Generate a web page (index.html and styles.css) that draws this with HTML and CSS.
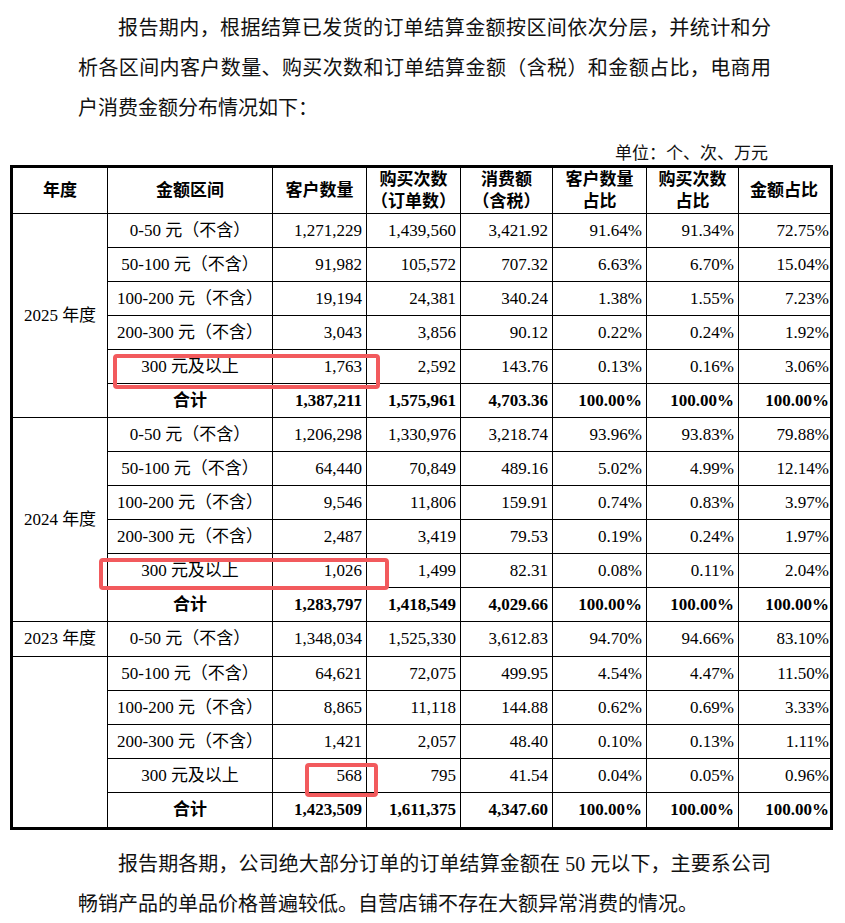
FILE: index.html
```html
<!DOCTYPE html>
<html lang="zh-CN">
<head>
<meta charset="utf-8">
<title>电商用户消费金额分布情况</title>
<link rel="stylesheet" href="styles.css">
</head>
<body>
<div class="page">
  <p class="para">报告期内，根据结算已发货的订单结算金额按区间依次分层，并统计和分析各区间内客户数量、购买次数和订单结算金额（含税）和金额占比，电商用户消费金额分布情况如下：</p>
  <div class="unit">单位：个、次、万元</div>
  <div class="table-wrap">
    <table class="data">
      <colgroup>
        <col class="c1"><col class="c2"><col class="c3"><col class="c4"><col class="c5"><col class="c6"><col class="c7"><col class="c8">
      </colgroup>
      <thead>
        <tr class="head">
          <th>年度</th><th>金额区间</th><th>客户数量</th><th>购买次数<br>（订单数）</th><th>消费额<br>（含税）</th><th>客户数量<br>占比</th><th>购买次数<br>占比</th><th class="last">金额占比</th>
        </tr>
      </thead>
      <tbody>
        <tr><td class="year" rowspan="6">2025 年度</td><td class="range">0-50 元（不含）</td><td>1,271,229</td><td>1,439,560</td><td>3,421.92</td><td>91.64%</td><td>91.34%</td><td class="last">72.75%</td></tr>
        <tr><td class="range">50-100 元（不含）</td><td>91,982</td><td>105,572</td><td>707.32</td><td>6.63%</td><td>6.70%</td><td class="last">15.04%</td></tr>
        <tr><td class="range">100-200 元（不含）</td><td>19,194</td><td>24,381</td><td>340.24</td><td>1.38%</td><td>1.55%</td><td class="last">7.23%</td></tr>
        <tr><td class="range">200-300 元（不含）</td><td>3,043</td><td>3,856</td><td>90.12</td><td>0.22%</td><td>0.24%</td><td class="last">1.92%</td></tr>
        <tr><td class="range">300 元及以上</td><td>1,763</td><td>2,592</td><td>143.76</td><td>0.13%</td><td>0.16%</td><td class="last">3.06%</td></tr>
        <tr class="total"><td class="range">合计</td><td>1,387,211</td><td>1,575,961</td><td>4,703.36</td><td>100.00%</td><td>100.00%</td><td class="last">100.00%</td></tr>

        <tr><td class="year" rowspan="6">2024 年度</td><td class="range">0-50 元（不含）</td><td>1,206,298</td><td>1,330,976</td><td>3,218.74</td><td>93.96%</td><td>93.83%</td><td class="last">79.88%</td></tr>
        <tr><td class="range">50-100 元（不含）</td><td>64,440</td><td>70,849</td><td>489.16</td><td>5.02%</td><td>4.99%</td><td class="last">12.14%</td></tr>
        <tr><td class="range">100-200 元（不含）</td><td>9,546</td><td>11,806</td><td>159.91</td><td>0.74%</td><td>0.83%</td><td class="last">3.97%</td></tr>
        <tr><td class="range">200-300 元（不含）</td><td>2,487</td><td>3,419</td><td>79.53</td><td>0.19%</td><td>0.24%</td><td class="last">1.97%</td></tr>
        <tr><td class="range">300 元及以上</td><td>1,026</td><td>1,499</td><td>82.31</td><td>0.08%</td><td>0.11%</td><td class="last">2.04%</td></tr>
        <tr class="total"><td class="range">合计</td><td>1,283,797</td><td>1,418,549</td><td>4,029.66</td><td>100.00%</td><td>100.00%</td><td class="last">100.00%</td></tr>

        <tr class="first23"><td class="year">2023 年度</td><td class="range">0-50 元（不含）</td><td>1,348,034</td><td>1,525,330</td><td>3,612.83</td><td>94.70%</td><td>94.66%</td><td class="last">83.10%</td></tr>
        <tr><td class="year end" rowspan="5"></td><td class="range">50-100 元（不含）</td><td>64,621</td><td>72,075</td><td>499.95</td><td>4.54%</td><td>4.47%</td><td class="last">11.50%</td></tr>
        <tr><td class="range">100-200 元（不含）</td><td>8,865</td><td>11,118</td><td>144.88</td><td>0.62%</td><td>0.69%</td><td class="last">3.33%</td></tr>
        <tr><td class="range">200-300 元（不含）</td><td>1,421</td><td>2,057</td><td>48.40</td><td>0.10%</td><td>0.13%</td><td class="last">1.11%</td></tr>
        <tr><td class="range">300 元及以上</td><td>568</td><td>795</td><td>41.54</td><td>0.04%</td><td>0.05%</td><td class="last">0.96%</td></tr>
        <tr class="total end-row"><td class="range">合计</td><td>1,423,509</td><td>1,611,375</td><td>4,347.60</td><td>100.00%</td><td>100.00%</td><td class="last">100.00%</td></tr>
      </tbody>
    </table>
    <div class="mark mark-2025"></div>
    <div class="mark mark-2024"></div>
    <div class="mark mark-2023"></div>
  </div>
  <p class="para after">报告期各期，公司绝大部分订单的订单结算金额在 50 元以下，主要系公司畅销产品的单品价格普遍较低。自营店铺不存在大额异常消费的情况。</p>
</div>
</body>
</html>
```

FILE: styles.css
```css
html, body {
  margin: 0;
  padding: 0;
  background: #ffffff;
}

.page {
  padding: 8px 0 0 10px;
  color: #000000;
  font-family: "Liberation Serif", "Noto Sans CJK SC", serif;
}

.para {
  margin: 0 0 0 68px;
  width: 693px;
  font-size: 20px;
  line-height: 40px;
  text-indent: 40px;
  text-align: justify;
  color: #111111;
}

.para.after {
  margin-top: 14px;
}

.unit {
  margin: 15px 0 0 68px;
  width: 690px;
  text-align: right;
  font-size: 17px;
  line-height: 22px;
  color: #111111;
}

.table-wrap {
  position: relative;
  width: 823px;
}

.data {
  border-collapse: separate;
  border-spacing: 0;
  border: 3px solid #000000;
  table-layout: fixed;
  width: 823px;
  font-size: 17px;
}

.c1 { width: 95px; }
.c2 { width: 165px; }
.c3 { width: 94px; }
.c4 { width: 94px; }
.c5 { width: 92px; }
.c6 { width: 94px; }
.c7 { width: 92px; }
.c8 { width: 91px; }

.data th,
.data td {
  border-right: 1px solid #000000;
  border-bottom: 1px solid #000000;
  padding: 0 4px 0 0;
  vertical-align: middle;
  white-space: nowrap;
}

.data th {
  font-weight: 700;
  line-height: 22px;
  text-align: center;
  padding: 0;
}

.data td {
  text-align: right;
  line-height: 20px;
}

.data .last {
  border-right: none;
  padding-right: 1px;
}

.data tr {
  height: 34px;
}

.data tr.head {
  height: 46px;
}

.data tr.first23 {
  height: 35px;
}

.data td.year,
.data td.range {
  text-align: center;
  padding: 0;
}

.data tr.total td {
  font-weight: 700;
}

.data tr.end-row td,
.data td.year.end {
  border-bottom: none;
}

.mark {
  position: absolute;
  border: 4px solid #f25a5d;
  border-radius: 4px;
  box-sizing: border-box;
}

.mark-2025 {
  left: 103px;
  top: 189px;
  width: 267px;
  height: 35px;
}

.mark-2024 {
  left: 89px;
  top: 393px;
  width: 290px;
  height: 32px;
}

.mark-2023 {
  left: 295px;
  top: 598px;
  width: 73px;
  height: 34px;
}
```
